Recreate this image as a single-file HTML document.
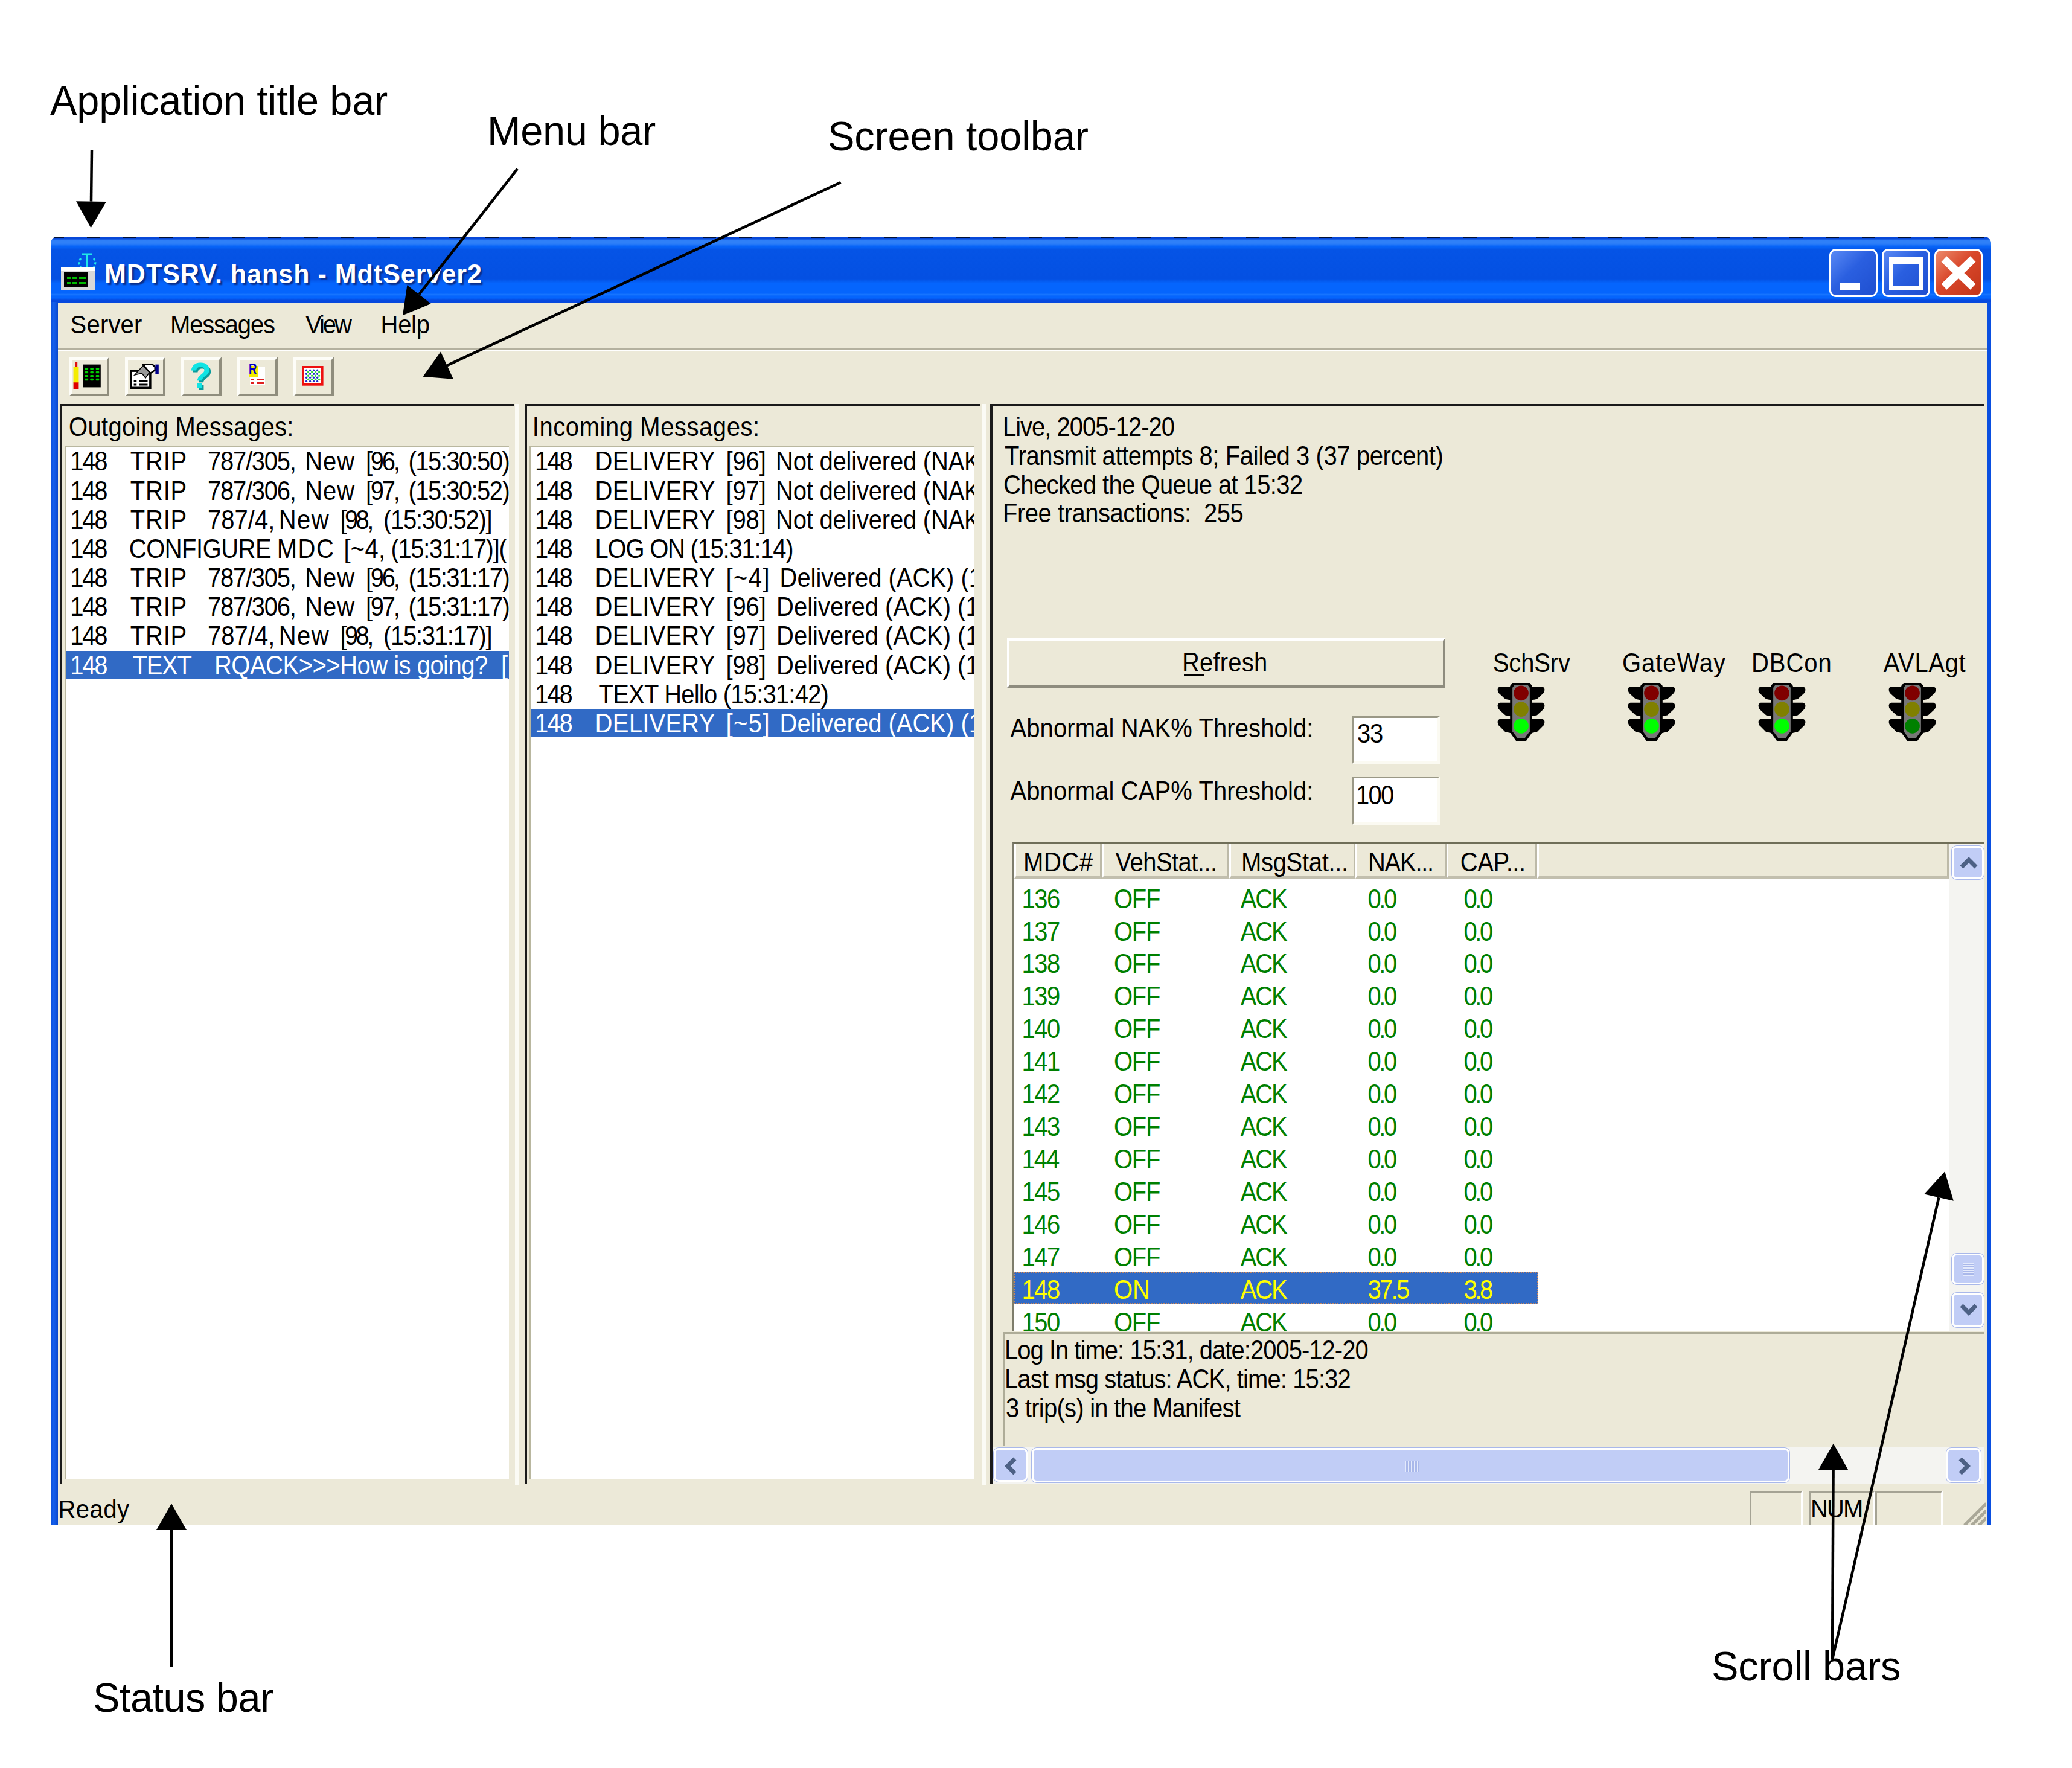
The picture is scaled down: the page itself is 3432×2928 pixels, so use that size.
<!DOCTYPE html><html lang="en"><head><meta charset="utf-8"><title>MDTSRV.hansh - MdtServer2</title><style>
html,body{margin:0;padding:0;background:#fff}
body{width:3432px;height:2928px;position:relative;overflow:hidden;font-family:"Liberation Sans",sans-serif}
div,span,svg,i,b{position:absolute;box-sizing:border-box}
.t{white-space:pre;line-height:1;font-size:40px;color:#000}
.face{background:#ece9d8}
#win{left:84px;top:392px;width:3214px;height:2134px;background:#ece9d8;overflow:hidden;border-radius:11px 11px 0 0}
#title{left:0;top:0;width:3214px;height:109px;background:linear-gradient(#0848d8 0,#0848d8 3%,#2f80f8 6%,#2f80f8 10%,#0764f8 15%,#0554e6 20%,#0450e2 64%,#0565fd 71%,#0565fd 86%,#1a78ff 88%,#0565fd 90%,#0565fd 93%,#0648de 97%,#0648de 100%)}
.lb{background:#fff;overflow:hidden;border-left:3px solid #b9b79f;border-top:2px solid #b9b79f}
.sel{background:#316ac5}
.btn3d{background:#ece9d8;border-top:4px solid #fff;border-left:4px solid #fff;border-right:4px solid #8e8c7e;border-bottom:4px solid #8e8c7e}
.tbtn{border-top:5px solid #fdfdf8;border-left:5px solid #fdfdf8;border-right:4px solid #8f8d7d;border-bottom:4px solid #8f8d7d;background:#ece9d8}
.cap{border:3px solid #fff;border-radius:11px}
.edit{background:#fff;border-top:3px solid #9a9886;border-left:3px solid #9a9886;border-right:4px solid #fbfaf2;border-bottom:4px solid #fbfaf2}
.hd{background:#ece9d8;border-right:3px solid #bdbaa8;border-bottom:4px solid #c2bfae;border-left:3px solid #fff}
.sb{background:#c1cdf6;border:3px solid #fff;border-radius:8px;box-shadow:0 0 0 1px #a9b8ea}
.trk{background:#f4f4f1}
</style></head><body>
<div id="win"><div id="title"><div style="left:0;top:0;width:3214px;height:2px;background:repeating-linear-gradient(90deg,rgba(0,0,0,.75) 0 22px,rgba(0,0,0,0) 22px 60px)"></div><svg style="left:14px;top:26px" width="62" height="64" viewBox="0 0 62 64"><g stroke="#20e8e8" stroke-width="3" fill="none"><path d="M46 26V4M38 3h16"/><path d="M36 10q-6 6 0 14M57 10q6 6 0 14" stroke-dasharray="4 3"/></g><rect x="3" y="24" width="56" height="38" fill="#d8d8d8"/><rect x="3" y="24" width="56" height="7" fill="#fff"/><rect x="8" y="33" width="40" height="25" fill="#000"/><g fill="#0b0"><rect x="13" y="40" width="6" height="4"/><rect x="22" y="40" width="8" height="4"/><rect x="33" y="40" width="12" height="4"/><rect x="13" y="49" width="6" height="4"/><rect x="22" y="49" width="8" height="4"/><rect x="33" y="49" width="12" height="4"/></g></svg><span class="t ttl" style="text-shadow:3px 3px 2px #0a2f8c;left:89.0px;top:41.0px;font-size:43px;letter-spacing:1.01px;color:#fff;font-weight:bold;transform:scaleY(1.045);transform-origin:0 36.5px;">MDTSRV. hansh - MdtServer2</span><div class="cap" style="left:2946px;top:20px;width:80px;height:80px;background:linear-gradient(135deg,#5a8af5,#2a5fe0 45%,#1f4fd0);"><i style="left:15px;top:53px;width:33px;height:12px;background:#fff"></i></div><div class="cap" style="left:3033px;top:20px;width:80px;height:80px;background:linear-gradient(135deg,#5a8af5,#2a5fe0 45%,#1f4fd0);"><i style="left:9px;top:10px;width:56px;height:55px;border:6px solid #fff;border-top-width:13px"></i></div><div class="cap" style="left:3120px;top:20px;width:80px;height:80px;background:linear-gradient(135deg,#ec8a6c,#d9472a 45%,#c2351a);"><svg style="left:0;top:0" width="74" height="74" viewBox="0 0 74 74"><path d="M13 14L61 60M61 14L13 60" stroke="#fff" stroke-width="13"/></svg></div></div><div style="left:0px;top:108px;width:12px;height:2026px;background:linear-gradient(90deg,#0a50d8,#1560ee 40%,#0a48cc)"></div><div style="left:3207px;top:108px;width:7px;height:2026px;background:#0a4fe0"></div><div id="menu" style="left:12px;top:108px;width:3195px;height:77px"><span class="t" style="left:20.6px;top:18.0px;font-size:40px;letter-spacing:0.18px;transform:scaleY(1.05);transform-origin:0 34px;">Server</span><span class="t" style="left:186.0px;top:18.0px;font-size:40px;letter-spacing:-1.19px;transform:scaleY(1.05);transform-origin:0 34px;">Messages</span><span class="t" style="left:410.0px;top:18.0px;font-size:40px;letter-spacing:-3.03px;transform:scaleY(1.05);transform-origin:0 34px;">View</span><span class="t" style="left:534.6px;top:18.0px;font-size:40px;letter-spacing:-0.31px;transform:scaleY(1.05);transform-origin:0 34px;">Help</span></div><div style="left:12px;top:184px;width:3195px;height:3px;background:#b4b19f"></div><div style="left:12px;top:187px;width:3195px;height:3px;background:#fff"></div><div class="tbtn" style="left:30px;top:199px;width:67px;height:65px;"><svg style="left:0;top:0" width="57" height="55" viewBox="0 0 57 55"><rect x="2.6" y="11" width="8.8" height="27" fill="#f4ec00"/><rect x="2.6" y="37.3" width="8.8" height="10.7" fill="#e00000"/><rect x="5.2" y="4" width="4" height="7.5" fill="#e01010"/><rect x="18" y="7.6" width="29.8" height="37.8" fill="#000"/><rect x="21.5" y="12.9" width="5.6" height="3.4" rx="1" fill="#00d000"/><rect x="30.3" y="12.9" width="5.6" height="3.4" rx="1" fill="#00d000"/><rect x="39.7" y="12.9" width="5.6" height="3.4" rx="1" fill="#00d000"/><rect x="21.5" y="18.9" width="5.6" height="3.4" rx="1" fill="#00d000"/><rect x="30.3" y="18.9" width="5.6" height="3.4" rx="1" fill="#00d000"/><rect x="39.7" y="18.9" width="5.6" height="3.4" rx="1" fill="#00d000"/><rect x="21.5" y="25" width="5.6" height="3.4" rx="1" fill="#00d000"/><rect x="30.3" y="25" width="5.6" height="3.4" rx="1" fill="#00d000"/><rect x="39.7" y="25" width="5.6" height="3.4" rx="1" fill="#00d000"/><rect x="21.5" y="30.8" width="5.6" height="3.4" rx="1" fill="#00d000"/><rect x="30.3" y="30.8" width="5.6" height="3.4" rx="1" fill="#00d000"/><rect x="39.7" y="30.8" width="5.6" height="3.4" rx="1" fill="#00d000"/></svg></div><div class="tbtn" style="left:123px;top:199px;width:67px;height:65px;"><svg style="left:0;top:0" width="57" height="55" viewBox="0 0 57 55"><rect x="5.25" y="18.15" width="31.6" height="28.1" fill="#fff" stroke="#000" stroke-width="3.5"/><path d="M9.6 35.6h4.7M18.4 35.6h14.1M9.6 41h4.7M18.4 41h14.1" stroke="#000" stroke-width="3"/><path d="M11 25L25 9.6L36 20L29 30L23 22Z" fill="#999" stroke="#000" stroke-width="1.5"/><path d="M25.1 7.6H40.6L44.7 11.6V17L37.3 21.8L32.5 17Z" fill="#fff" stroke="#000" stroke-width="2.5"/><rect x="45.4" y="7.6" width="5.4" height="16.2" fill="#00008b"/></svg></div><div class="tbtn" style="left:216px;top:199px;width:67px;height:65px;"><span class="t" style="left:8.5px;top:-5.5px;font-size:62px;font-weight:bold;color:#10e4e4;text-shadow:2.5px 2.5px 0 #0a9c9c;transform:scaleX(.95);transform-origin:0 0">?</span></div><div class="tbtn" style="left:309px;top:199px;width:67px;height:65px;"><i style="left:16.4px;top:11px;width:24.3px;height:31.4px;background:#fff"></i><i style="left:14.8px;top:10.2px;width:15.5px;height:17.4px;background:#f4ec00"></i><i style="left:30.3px;top:10.7px;width:10.6px;height:17.8px;background:#fff"></i><span class="t" style="left:14px;top:2.8px;font-size:25.7px;font-weight:bold;color:#0000c8;transform:scaleX(.72);transform-origin:0 0">R</span><i style="left:18.2px;top:31.4px;width:4.8px;height:3px;background:#e02020"></i><i style="left:27.8px;top:31.4px;width:11.2px;height:3px;background:#e02020"></i><i style="left:18.2px;top:36.9px;width:4.8px;height:3px;background:#e02020"></i><i style="left:27.8px;top:36.9px;width:11.2px;height:3px;background:#e02020"></i></div><div class="tbtn" style="left:402px;top:199px;width:67px;height:65px;"><svg style="left:0;top:0" width="57" height="55" viewBox="0 0 57 55"><rect x="10.85" y="11.85" width="31.9" height="29" fill="#fff"/><circle cx="16.5" cy="17.1" r="1.7" fill="#2030c8"/><circle cx="22.6" cy="17.1" r="1.7" fill="#2030c8"/><circle cx="28.6" cy="17.1" r="1.7" fill="#2030c8"/><circle cx="34.6" cy="17.1" r="1.7" fill="#2030c8"/><circle cx="16.5" cy="23.2" r="1.7" fill="#2030c8"/><circle cx="22.6" cy="23.2" r="1.7" fill="#2030c8"/><circle cx="28.6" cy="23.2" r="1.7" fill="#2030c8"/><circle cx="34.6" cy="23.2" r="1.7" fill="#2030c8"/><circle cx="16.5" cy="29.3" r="1.7" fill="#2030c8"/><circle cx="22.6" cy="29.3" r="1.7" fill="#2030c8"/><circle cx="28.6" cy="29.3" r="1.7" fill="#2030c8"/><circle cx="34.6" cy="29.3" r="1.7" fill="#2030c8"/><circle cx="16.5" cy="35.4" r="1.7" fill="#2030c8"/><circle cx="22.6" cy="35.4" r="1.7" fill="#2030c8"/><circle cx="28.6" cy="35.4" r="1.7" fill="#2030c8"/><circle cx="34.6" cy="35.4" r="1.7" fill="#2030c8"/><circle cx="19.5" cy="20.1" r="1.7" fill="#30d838"/><circle cx="25.6" cy="20.1" r="1.7" fill="#30d838"/><circle cx="31.6" cy="20.1" r="1.7" fill="#30d838"/><circle cx="37.6" cy="20.1" r="1.7" fill="#30d838"/><circle cx="19.5" cy="26.2" r="1.7" fill="#30d838"/><circle cx="25.6" cy="26.2" r="1.7" fill="#30d838"/><circle cx="31.6" cy="26.2" r="1.7" fill="#30d838"/><circle cx="37.6" cy="26.2" r="1.7" fill="#30d838"/><circle cx="19.5" cy="32.3" r="1.7" fill="#30d838"/><circle cx="25.6" cy="32.3" r="1.7" fill="#30d838"/><circle cx="31.6" cy="32.3" r="1.7" fill="#30d838"/><circle cx="37.6" cy="32.3" r="1.7" fill="#30d838"/><rect x="10.85" y="11.85" width="31.9" height="29" fill="none" stroke="#ee1010" stroke-width="3.7"/></svg></div><div style="left:15px;top:277px;width:752px;height:4px;background:#1a1a1a"></div><div style="left:15px;top:277px;width:4px;height:1789px;background:#1a1a1a"></div><div style="left:769px;top:277px;width:6px;height:1790px;background:#fbfbf5"></div><div style="left:785px;top:277px;width:754px;height:4px;background:#1a1a1a"></div><div style="left:785px;top:277px;width:4px;height:1789px;background:#1a1a1a"></div><div style="left:1543px;top:277px;width:6px;height:1790px;background:#fbfbf5"></div><div style="left:1556px;top:277px;width:1647px;height:4px;background:#1a1a1a"></div><div style="left:1556px;top:277px;width:4px;height:1789px;background:#1a1a1a"></div><span class="t" style="left:30.0px;top:295.5px;font-size:40px;letter-spacing:0.33px;transform:scaleY(1.09);transform-origin:0 34px;">Outgoing Messages:</span><div class="lb" style="left:23px;top:347px;width:736px;height:1710px;"><span class="t" style="left:6.3px;top:4.4px;font-size:40px;letter-spacing:-2.30px;transform:scaleY(1.09);transform-origin:0 34px;">148</span><span class="t" style="left:105.8px;top:4.4px;font-size:40px;letter-spacing:0.76px;transform:scaleY(1.09);transform-origin:0 34px;">TRIP</span><span class="t" style="left:234.0px;top:4.4px;font-size:40px;letter-spacing:-1.28px;transform:scaleY(1.09);transform-origin:0 34px;">787/305,</span><span class="t" style="left:395.3px;top:4.4px;font-size:40px;letter-spacing:0.88px;transform:scaleY(1.09);transform-origin:0 34px;">New</span><span class="t" style="left:496.0px;top:4.4px;font-size:40px;letter-spacing:-3.27px;transform:scaleY(1.09);transform-origin:0 34px;">[96,</span><span class="t" style="left:566.5px;top:4.4px;font-size:40px;letter-spacing:-1.56px;transform:scaleY(1.09);transform-origin:0 34px;">(15:30:50)</span><span class="t" style="left:6.3px;top:52.5px;font-size:40px;letter-spacing:-2.30px;transform:scaleY(1.09);transform-origin:0 34px;">148</span><span class="t" style="left:105.8px;top:52.5px;font-size:40px;letter-spacing:0.76px;transform:scaleY(1.09);transform-origin:0 34px;">TRIP</span><span class="t" style="left:234.0px;top:52.5px;font-size:40px;letter-spacing:-1.28px;transform:scaleY(1.09);transform-origin:0 34px;">787/306,</span><span class="t" style="left:395.3px;top:52.5px;font-size:40px;letter-spacing:0.88px;transform:scaleY(1.09);transform-origin:0 34px;">New</span><span class="t" style="left:496.0px;top:52.5px;font-size:40px;letter-spacing:-3.27px;transform:scaleY(1.09);transform-origin:0 34px;">[97,</span><span class="t" style="left:566.5px;top:52.5px;font-size:40px;letter-spacing:-1.56px;transform:scaleY(1.09);transform-origin:0 34px;">(15:30:52)</span><span class="t" style="left:6.3px;top:100.7px;font-size:40px;letter-spacing:-2.30px;transform:scaleY(1.09);transform-origin:0 34px;">148</span><span class="t" style="left:105.8px;top:100.7px;font-size:40px;letter-spacing:0.76px;transform:scaleY(1.09);transform-origin:0 34px;">TRIP</span><span class="t" style="left:234.0px;top:100.7px;font-size:40px;letter-spacing:0.04px;transform:scaleY(1.09);transform-origin:0 34px;">787/4,</span><span class="t" style="left:351.7px;top:100.7px;font-size:40px;letter-spacing:1.48px;transform:scaleY(1.09);transform-origin:0 34px;">New</span><span class="t" style="left:453.6px;top:100.7px;font-size:40px;letter-spacing:-3.67px;transform:scaleY(1.09);transform-origin:0 34px;">[98,</span><span class="t" style="left:525.0px;top:100.7px;font-size:40px;letter-spacing:-1.29px;transform:scaleY(1.09);transform-origin:0 34px;">(15:30:52)]</span><span class="t" style="left:6.3px;top:148.8px;font-size:40px;letter-spacing:-2.30px;transform:scaleY(1.09);transform-origin:0 34px;">148</span><span class="t" style="left:103.8px;top:148.8px;font-size:40px;letter-spacing:-0.52px;transform:scaleY(1.09);transform-origin:0 34px;">CONFIGURE</span><span class="t" style="left:348.8px;top:148.8px;font-size:40px;letter-spacing:1.50px;transform:scaleY(1.09);transform-origin:0 34px;">MDC</span><span class="t" style="left:459.4px;top:148.8px;font-size:40px;letter-spacing:0.29px;transform:scaleY(1.09);transform-origin:0 34px;">[~4,</span><span class="t" style="left:537.4px;top:148.8px;font-size:40px;letter-spacing:-1.31px;transform:scaleY(1.09);transform-origin:0 34px;">(15:31:17)](</span><span class="t" style="left:6.3px;top:197.0px;font-size:40px;letter-spacing:-2.30px;transform:scaleY(1.09);transform-origin:0 34px;">148</span><span class="t" style="left:105.8px;top:197.0px;font-size:40px;letter-spacing:0.76px;transform:scaleY(1.09);transform-origin:0 34px;">TRIP</span><span class="t" style="left:234.0px;top:197.0px;font-size:40px;letter-spacing:-1.28px;transform:scaleY(1.09);transform-origin:0 34px;">787/305,</span><span class="t" style="left:395.3px;top:197.0px;font-size:40px;letter-spacing:0.88px;transform:scaleY(1.09);transform-origin:0 34px;">New</span><span class="t" style="left:496.0px;top:197.0px;font-size:40px;letter-spacing:-3.27px;transform:scaleY(1.09);transform-origin:0 34px;">[96,</span><span class="t" style="left:566.5px;top:197.0px;font-size:40px;letter-spacing:-1.56px;transform:scaleY(1.09);transform-origin:0 34px;">(15:31:17)</span><span class="t" style="left:6.3px;top:245.1px;font-size:40px;letter-spacing:-2.30px;transform:scaleY(1.09);transform-origin:0 34px;">148</span><span class="t" style="left:105.8px;top:245.1px;font-size:40px;letter-spacing:0.76px;transform:scaleY(1.09);transform-origin:0 34px;">TRIP</span><span class="t" style="left:234.0px;top:245.1px;font-size:40px;letter-spacing:-1.28px;transform:scaleY(1.09);transform-origin:0 34px;">787/306,</span><span class="t" style="left:395.3px;top:245.1px;font-size:40px;letter-spacing:0.88px;transform:scaleY(1.09);transform-origin:0 34px;">New</span><span class="t" style="left:496.0px;top:245.1px;font-size:40px;letter-spacing:-3.27px;transform:scaleY(1.09);transform-origin:0 34px;">[97,</span><span class="t" style="left:566.5px;top:245.1px;font-size:40px;letter-spacing:-1.56px;transform:scaleY(1.09);transform-origin:0 34px;">(15:31:17)</span><span class="t" style="left:6.3px;top:293.3px;font-size:40px;letter-spacing:-2.30px;transform:scaleY(1.09);transform-origin:0 34px;">148</span><span class="t" style="left:105.8px;top:293.3px;font-size:40px;letter-spacing:0.76px;transform:scaleY(1.09);transform-origin:0 34px;">TRIP</span><span class="t" style="left:234.0px;top:293.3px;font-size:40px;letter-spacing:0.04px;transform:scaleY(1.09);transform-origin:0 34px;">787/4,</span><span class="t" style="left:351.7px;top:293.3px;font-size:40px;letter-spacing:1.48px;transform:scaleY(1.09);transform-origin:0 34px;">New</span><span class="t" style="left:453.6px;top:293.3px;font-size:40px;letter-spacing:-3.67px;transform:scaleY(1.09);transform-origin:0 34px;">[98,</span><span class="t" style="left:525.0px;top:293.3px;font-size:40px;letter-spacing:-1.29px;transform:scaleY(1.09);transform-origin:0 34px;">(15:31:17)]</span><div class="sel" style="left:0px;top:337px;width:733px;height:46px;"></div><span class="t" style="left:6.3px;top:341.5px;font-size:40px;letter-spacing:-2.30px;color:#fff;transform:scaleY(1.09);transform-origin:0 34px;">148</span><span class="t" style="left:109.8px;top:341.5px;font-size:40px;letter-spacing:-1.40px;color:#fff;transform:scaleY(1.09);transform-origin:0 34px;">TEXT</span><span class="t" style="left:245.0px;top:341.5px;font-size:40px;letter-spacing:-0.52px;color:#fff;transform:scaleY(1.09);transform-origin:0 34px;">RQACK&gt;&gt;&gt;How is going?</span><span class="t" style="left:720.0px;top:341.5px;font-size:40px;color:#fff;transform:scaleY(1.09);transform-origin:0 34px;">[</span></div><span class="t" style="left:797.8px;top:295.5px;font-size:40px;letter-spacing:0.56px;transform:scaleY(1.09);transform-origin:0 34px;">Incoming Messages:</span><div class="lb" style="left:793px;top:347px;width:737px;height:1710px;"><span class="t" style="left:6.0px;top:4.4px;font-size:40px;letter-spacing:-2.00px;transform:scaleY(1.09);transform-origin:0 34px;">148</span><span class="t" style="left:105.6px;top:4.4px;font-size:40px;letter-spacing:0.24px;transform:scaleY(1.09);transform-origin:0 34px;">DELIVERY</span><span class="t" style="left:322.5px;top:4.4px;font-size:40px;letter-spacing:-0.14px;transform:scaleY(1.09);transform-origin:0 34px;">[96]</span><span class="t" style="left:405.0px;top:4.4px;font-size:40px;letter-spacing:-0.21px;transform:scaleY(1.09);transform-origin:0 34px;">Not delivered (NAK) (15:30:50)</span><span class="t" style="left:6.0px;top:52.5px;font-size:40px;letter-spacing:-2.00px;transform:scaleY(1.09);transform-origin:0 34px;">148</span><span class="t" style="left:105.6px;top:52.5px;font-size:40px;letter-spacing:0.24px;transform:scaleY(1.09);transform-origin:0 34px;">DELIVERY</span><span class="t" style="left:322.5px;top:52.5px;font-size:40px;letter-spacing:-0.14px;transform:scaleY(1.09);transform-origin:0 34px;">[97]</span><span class="t" style="left:405.0px;top:52.5px;font-size:40px;letter-spacing:-0.21px;transform:scaleY(1.09);transform-origin:0 34px;">Not delivered (NAK) (15:30:52)</span><span class="t" style="left:6.0px;top:100.7px;font-size:40px;letter-spacing:-2.00px;transform:scaleY(1.09);transform-origin:0 34px;">148</span><span class="t" style="left:105.6px;top:100.7px;font-size:40px;letter-spacing:0.24px;transform:scaleY(1.09);transform-origin:0 34px;">DELIVERY</span><span class="t" style="left:322.5px;top:100.7px;font-size:40px;letter-spacing:-0.14px;transform:scaleY(1.09);transform-origin:0 34px;">[98]</span><span class="t" style="left:405.0px;top:100.7px;font-size:40px;letter-spacing:-0.21px;transform:scaleY(1.09);transform-origin:0 34px;">Not delivered (NAK) (15:30:54)</span><span class="t" style="left:6.0px;top:148.8px;font-size:40px;letter-spacing:-2.00px;transform:scaleY(1.09);transform-origin:0 34px;">148</span><span class="t" style="left:105.6px;top:148.8px;font-size:40px;letter-spacing:-1.25px;transform:scaleY(1.09);transform-origin:0 34px;">LOG ON (15:31:14)</span><span class="t" style="left:6.0px;top:197.0px;font-size:40px;letter-spacing:-2.00px;transform:scaleY(1.09);transform-origin:0 34px;">148</span><span class="t" style="left:105.6px;top:197.0px;font-size:40px;letter-spacing:0.24px;transform:scaleY(1.09);transform-origin:0 34px;">DELIVERY</span><span class="t" style="left:322.5px;top:197.0px;font-size:40px;letter-spacing:1.43px;transform:scaleY(1.09);transform-origin:0 34px;">[~4]</span><span class="t" style="left:411.5px;top:197.0px;font-size:40px;letter-spacing:-0.01px;transform:scaleY(1.09);transform-origin:0 34px;">Delivered (ACK) (15:31:17)</span><span class="t" style="left:6.0px;top:245.1px;font-size:40px;letter-spacing:-2.00px;transform:scaleY(1.09);transform-origin:0 34px;">148</span><span class="t" style="left:105.6px;top:245.1px;font-size:40px;letter-spacing:0.24px;transform:scaleY(1.09);transform-origin:0 34px;">DELIVERY</span><span class="t" style="left:322.5px;top:245.1px;font-size:40px;letter-spacing:-0.14px;transform:scaleY(1.09);transform-origin:0 34px;">[96]</span><span class="t" style="left:406.0px;top:245.1px;font-size:40px;transform:scaleY(1.09);transform-origin:0 34px;">Delivered (ACK) (15:31:18)</span><span class="t" style="left:6.0px;top:293.3px;font-size:40px;letter-spacing:-2.00px;transform:scaleY(1.09);transform-origin:0 34px;">148</span><span class="t" style="left:105.6px;top:293.3px;font-size:40px;letter-spacing:0.24px;transform:scaleY(1.09);transform-origin:0 34px;">DELIVERY</span><span class="t" style="left:322.5px;top:293.3px;font-size:40px;letter-spacing:-0.14px;transform:scaleY(1.09);transform-origin:0 34px;">[97]</span><span class="t" style="left:406.0px;top:293.3px;font-size:40px;transform:scaleY(1.09);transform-origin:0 34px;">Delivered (ACK) (15:31:18)</span><span class="t" style="left:6.0px;top:341.5px;font-size:40px;letter-spacing:-2.00px;transform:scaleY(1.09);transform-origin:0 34px;">148</span><span class="t" style="left:105.6px;top:341.5px;font-size:40px;letter-spacing:0.24px;transform:scaleY(1.09);transform-origin:0 34px;">DELIVERY</span><span class="t" style="left:322.5px;top:341.5px;font-size:40px;letter-spacing:-0.14px;transform:scaleY(1.09);transform-origin:0 34px;">[98]</span><span class="t" style="left:406.0px;top:341.5px;font-size:40px;transform:scaleY(1.09);transform-origin:0 34px;">Delivered (ACK) (15:31:18)</span><span class="t" style="left:6.0px;top:389.6px;font-size:40px;letter-spacing:-2.00px;transform:scaleY(1.09);transform-origin:0 34px;">148</span><span class="t" style="left:111.5px;top:389.6px;font-size:40px;letter-spacing:-0.79px;transform:scaleY(1.09);transform-origin:0 34px;">TEXT Hello (15:31:42)</span><div class="sel" style="left:0px;top:433px;width:735px;height:46px;"></div><span class="t" style="left:6.0px;top:437.8px;font-size:40px;letter-spacing:-2.00px;color:#fff;transform:scaleY(1.09);transform-origin:0 34px;">148</span><span class="t" style="left:105.6px;top:437.8px;font-size:40px;letter-spacing:0.24px;color:#fff;transform:scaleY(1.09);transform-origin:0 34px;">DELIVERY</span><span class="t" style="left:322.5px;top:437.8px;font-size:40px;letter-spacing:1.43px;color:#fff;transform:scaleY(1.09);transform-origin:0 34px;">[~5]</span><span class="t" style="left:411.5px;top:437.8px;font-size:40px;letter-spacing:-0.01px;color:#fff;transform:scaleY(1.09);transform-origin:0 34px;">Delivered (ACK) (15:31:43)</span></div><span class="t" style="left:1577.0px;top:295.8px;font-size:40px;letter-spacing:-1.02px;transform:scaleY(1.09);transform-origin:0 34px;">Live, 2005-12-20</span><span class="t" style="left:1580.0px;top:343.6px;font-size:40px;letter-spacing:-0.40px;transform:scaleY(1.09);transform-origin:0 34px;">Transmit attempts 8; Failed 3 (37 percent)</span><span class="t" style="left:1578.0px;top:391.5px;font-size:40px;letter-spacing:-0.61px;transform:scaleY(1.09);transform-origin:0 34px;">Checked the Queue at 15:32</span><span class="t" style="left:1577.0px;top:439.2px;font-size:40px;letter-spacing:-0.47px;transform:scaleY(1.09);transform-origin:0 34px;">Free transactions:  255</span><div class="btn3d" style="left:1584px;top:665px;width:726px;height:82px;"><span class="t" style="left:286.0px;top:16.5px;font-size:40px;letter-spacing:0.20px;transform:scaleY(1.09);transform-origin:0 34px;">Refresh</span><div style="left:289px;top:56px;width:34px;height:3px;background:#000"></div></div><span class="t" style="left:1589.4px;top:794.5px;font-size:40px;letter-spacing:0.11px;transform:scaleY(1.09);transform-origin:0 34px;">Abnormal NAK% Threshold:</span><span class="t" style="left:1589.4px;top:898.5px;font-size:40px;letter-spacing:0.11px;transform:scaleY(1.09);transform-origin:0 34px;">Abnormal CAP% Threshold:</span><div class="edit" style="left:2156px;top:794px;width:145px;height:79px;"><span class="t" style="left:5.0px;top:6.5px;font-size:40px;letter-spacing:-1.25px;transform:scaleY(1.09);transform-origin:0 34px;">33</span></div><div class="edit" style="left:2156px;top:894px;width:145px;height:80px;"><span class="t" style="left:3.0px;top:8.5px;font-size:40px;letter-spacing:-1.75px;transform:scaleY(1.09);transform-origin:0 34px;">100</span></div><span class="t" style="left:2388.8px;top:686.5px;font-size:40px;letter-spacing:-0.15px;transform:scaleY(1.09);transform-origin:0 34px;">SchSrv</span><span class="t" style="left:2603.0px;top:686.5px;font-size:40px;letter-spacing:0.96px;transform:scaleY(1.09);transform-origin:0 34px;">GateWay</span><span class="t" style="left:2817.0px;top:686.5px;font-size:40px;letter-spacing:0.95px;transform:scaleY(1.09);transform-origin:0 34px;">DBCon</span><span class="t" style="left:3035.7px;top:686.5px;font-size:40px;letter-spacing:0.67px;transform:scaleY(1.09);transform-origin:0 34px;">AVLAgt</span><svg style="left:2396px;top:739px" width="80" height="99" viewBox="0 0 80 100"><g fill="#000">  <path d="M4 6H23V29L13 27L2 17Q-1 12 1 8Z"/><path d="M75 6H56V29L66 27L77 17Q80 12 78 8Z"/>  <path d="M4 33H23V56L13 54L2 44Q-1 39 1 35Z"/><path d="M75 33H56V56L66 54L77 44Q80 39 78 35Z"/>  <path d="M4 60H23V84L13 82L2 71Q-1 66 1 62Z"/><path d="M75 60H56V84L66 82L77 71Q80 66 78 62Z"/>  <path d="M25 0H54L58 5V83L48 97H31L21 83V5Z"/> </g> <path d="M28 4H51L54 8V81L46 92H33L25 81V8Z" fill="#777"/> <circle cx="39.5" cy="17" r="12.5" fill="#800000"/><circle cx="39.5" cy="44" r="12.5" fill="#808000"/><circle cx="39.5" cy="72" r="12.5" fill="#00ff00"/></svg><svg style="left:2612px;top:739px" width="80" height="99" viewBox="0 0 80 100"><g fill="#000">  <path d="M4 6H23V29L13 27L2 17Q-1 12 1 8Z"/><path d="M75 6H56V29L66 27L77 17Q80 12 78 8Z"/>  <path d="M4 33H23V56L13 54L2 44Q-1 39 1 35Z"/><path d="M75 33H56V56L66 54L77 44Q80 39 78 35Z"/>  <path d="M4 60H23V84L13 82L2 71Q-1 66 1 62Z"/><path d="M75 60H56V84L66 82L77 71Q80 66 78 62Z"/>  <path d="M25 0H54L58 5V83L48 97H31L21 83V5Z"/> </g> <path d="M28 4H51L54 8V81L46 92H33L25 81V8Z" fill="#777"/> <circle cx="39.5" cy="17" r="12.5" fill="#800000"/><circle cx="39.5" cy="44" r="12.5" fill="#808000"/><circle cx="39.5" cy="72" r="12.5" fill="#00ff00"/></svg><svg style="left:2828px;top:739px" width="80" height="99" viewBox="0 0 80 100"><g fill="#000">  <path d="M4 6H23V29L13 27L2 17Q-1 12 1 8Z"/><path d="M75 6H56V29L66 27L77 17Q80 12 78 8Z"/>  <path d="M4 33H23V56L13 54L2 44Q-1 39 1 35Z"/><path d="M75 33H56V56L66 54L77 44Q80 39 78 35Z"/>  <path d="M4 60H23V84L13 82L2 71Q-1 66 1 62Z"/><path d="M75 60H56V84L66 82L77 71Q80 66 78 62Z"/>  <path d="M25 0H54L58 5V83L48 97H31L21 83V5Z"/> </g> <path d="M28 4H51L54 8V81L46 92H33L25 81V8Z" fill="#777"/> <circle cx="39.5" cy="17" r="12.5" fill="#800000"/><circle cx="39.5" cy="44" r="12.5" fill="#808000"/><circle cx="39.5" cy="72" r="12.5" fill="#00ff00"/></svg><svg style="left:3044px;top:739px" width="80" height="99" viewBox="0 0 80 100"><g fill="#000">  <path d="M4 6H23V29L13 27L2 17Q-1 12 1 8Z"/><path d="M75 6H56V29L66 27L77 17Q80 12 78 8Z"/>  <path d="M4 33H23V56L13 54L2 44Q-1 39 1 35Z"/><path d="M75 33H56V56L66 54L77 44Q80 39 78 35Z"/>  <path d="M4 60H23V84L13 82L2 71Q-1 66 1 62Z"/><path d="M75 60H56V84L66 82L77 71Q80 66 78 62Z"/>  <path d="M25 0H54L58 5V83L48 97H31L21 83V5Z"/> </g> <path d="M28 4H51L54 8V81L46 92H33L25 81V8Z" fill="#777"/> <circle cx="39.5" cy="17" r="12.5" fill="#800000"/><circle cx="39.5" cy="44" r="12.5" fill="#808000"/><circle cx="39.5" cy="72" r="12.5" fill="#008000"/></svg><div style="left:1592px;top:1002px;width:1611px;height:810px;background:#fff;overflow:hidden;border-left:4px solid #7e7d6c;border-top:4px solid #6f6e58"><div class="hd" style="left:0px;top:0px;width:145px;height:57px;"><span class="t" style="left:12.0px;top:11.0px;font-size:40px;letter-spacing:0.64px;transform:scaleY(1.09);transform-origin:0 34px;">MDC#</span></div><div class="hd" style="left:145px;top:0px;width:211px;height:57px;"><span class="t" style="left:19.6px;top:11.0px;font-size:40px;letter-spacing:-0.55px;transform:scaleY(1.09);transform-origin:0 34px;">VehStat...</span></div><div class="hd" style="left:356px;top:0px;width:209px;height:57px;"><span class="t" style="left:17.0px;top:11.0px;font-size:40px;letter-spacing:-0.33px;transform:scaleY(1.09);transform-origin:0 34px;">MsgStat...</span></div><div class="hd" style="left:565px;top:0px;width:151px;height:57px;"><span class="t" style="left:18.0px;top:11.0px;font-size:40px;letter-spacing:-1.29px;transform:scaleY(1.09);transform-origin:0 34px;">NAK...</span></div><div class="hd" style="left:716px;top:0px;width:150px;height:57px;"><span class="t" style="left:19.8px;top:11.0px;font-size:40px;letter-spacing:-0.42px;transform:scaleY(1.09);transform-origin:0 34px;">CAP...</span></div><div class="hd" style="left:866px;top:0px;width:682px;height:57px;"></div><span class="t" style="left:12.6px;top:71.5px;font-size:40px;letter-spacing:-1.55px;color:#008000;transform:scaleY(1.09);transform-origin:0 34px;">136</span><span class="t" style="left:165.0px;top:71.5px;font-size:40px;letter-spacing:-1.27px;color:#008000;transform:scaleY(1.09);transform-origin:0 34px;">OFF</span><span class="t" style="left:374.7px;top:71.5px;font-size:40px;letter-spacing:-2.13px;color:#008000;transform:scaleY(1.09);transform-origin:0 34px;">ACK</span><span class="t" style="left:585.5px;top:71.5px;font-size:40px;letter-spacing:-3.43px;color:#008000;transform:scaleY(1.09);transform-origin:0 34px;">0.0</span><span class="t" style="left:744.5px;top:71.5px;font-size:40px;letter-spacing:-3.43px;color:#008000;transform:scaleY(1.09);transform-origin:0 34px;">0.0</span><span class="t" style="left:12.6px;top:125.5px;font-size:40px;letter-spacing:-1.55px;color:#008000;transform:scaleY(1.09);transform-origin:0 34px;">137</span><span class="t" style="left:165.0px;top:125.5px;font-size:40px;letter-spacing:-1.27px;color:#008000;transform:scaleY(1.09);transform-origin:0 34px;">OFF</span><span class="t" style="left:374.7px;top:125.5px;font-size:40px;letter-spacing:-2.13px;color:#008000;transform:scaleY(1.09);transform-origin:0 34px;">ACK</span><span class="t" style="left:585.5px;top:125.5px;font-size:40px;letter-spacing:-3.43px;color:#008000;transform:scaleY(1.09);transform-origin:0 34px;">0.0</span><span class="t" style="left:744.5px;top:125.5px;font-size:40px;letter-spacing:-3.43px;color:#008000;transform:scaleY(1.09);transform-origin:0 34px;">0.0</span><span class="t" style="left:12.6px;top:179.4px;font-size:40px;letter-spacing:-1.55px;color:#008000;transform:scaleY(1.09);transform-origin:0 34px;">138</span><span class="t" style="left:165.0px;top:179.4px;font-size:40px;letter-spacing:-1.27px;color:#008000;transform:scaleY(1.09);transform-origin:0 34px;">OFF</span><span class="t" style="left:374.7px;top:179.4px;font-size:40px;letter-spacing:-2.13px;color:#008000;transform:scaleY(1.09);transform-origin:0 34px;">ACK</span><span class="t" style="left:585.5px;top:179.4px;font-size:40px;letter-spacing:-3.43px;color:#008000;transform:scaleY(1.09);transform-origin:0 34px;">0.0</span><span class="t" style="left:744.5px;top:179.4px;font-size:40px;letter-spacing:-3.43px;color:#008000;transform:scaleY(1.09);transform-origin:0 34px;">0.0</span><span class="t" style="left:12.6px;top:233.4px;font-size:40px;letter-spacing:-1.55px;color:#008000;transform:scaleY(1.09);transform-origin:0 34px;">139</span><span class="t" style="left:165.0px;top:233.4px;font-size:40px;letter-spacing:-1.27px;color:#008000;transform:scaleY(1.09);transform-origin:0 34px;">OFF</span><span class="t" style="left:374.7px;top:233.4px;font-size:40px;letter-spacing:-2.13px;color:#008000;transform:scaleY(1.09);transform-origin:0 34px;">ACK</span><span class="t" style="left:585.5px;top:233.4px;font-size:40px;letter-spacing:-3.43px;color:#008000;transform:scaleY(1.09);transform-origin:0 34px;">0.0</span><span class="t" style="left:744.5px;top:233.4px;font-size:40px;letter-spacing:-3.43px;color:#008000;transform:scaleY(1.09);transform-origin:0 34px;">0.0</span><span class="t" style="left:12.6px;top:287.4px;font-size:40px;letter-spacing:-1.55px;color:#008000;transform:scaleY(1.09);transform-origin:0 34px;">140</span><span class="t" style="left:165.0px;top:287.4px;font-size:40px;letter-spacing:-1.27px;color:#008000;transform:scaleY(1.09);transform-origin:0 34px;">OFF</span><span class="t" style="left:374.7px;top:287.4px;font-size:40px;letter-spacing:-2.13px;color:#008000;transform:scaleY(1.09);transform-origin:0 34px;">ACK</span><span class="t" style="left:585.5px;top:287.4px;font-size:40px;letter-spacing:-3.43px;color:#008000;transform:scaleY(1.09);transform-origin:0 34px;">0.0</span><span class="t" style="left:744.5px;top:287.4px;font-size:40px;letter-spacing:-3.43px;color:#008000;transform:scaleY(1.09);transform-origin:0 34px;">0.0</span><span class="t" style="left:12.6px;top:341.3px;font-size:40px;letter-spacing:-1.55px;color:#008000;transform:scaleY(1.09);transform-origin:0 34px;">141</span><span class="t" style="left:165.0px;top:341.3px;font-size:40px;letter-spacing:-1.27px;color:#008000;transform:scaleY(1.09);transform-origin:0 34px;">OFF</span><span class="t" style="left:374.7px;top:341.3px;font-size:40px;letter-spacing:-2.13px;color:#008000;transform:scaleY(1.09);transform-origin:0 34px;">ACK</span><span class="t" style="left:585.5px;top:341.3px;font-size:40px;letter-spacing:-3.43px;color:#008000;transform:scaleY(1.09);transform-origin:0 34px;">0.0</span><span class="t" style="left:744.5px;top:341.3px;font-size:40px;letter-spacing:-3.43px;color:#008000;transform:scaleY(1.09);transform-origin:0 34px;">0.0</span><span class="t" style="left:12.6px;top:395.3px;font-size:40px;letter-spacing:-1.55px;color:#008000;transform:scaleY(1.09);transform-origin:0 34px;">142</span><span class="t" style="left:165.0px;top:395.3px;font-size:40px;letter-spacing:-1.27px;color:#008000;transform:scaleY(1.09);transform-origin:0 34px;">OFF</span><span class="t" style="left:374.7px;top:395.3px;font-size:40px;letter-spacing:-2.13px;color:#008000;transform:scaleY(1.09);transform-origin:0 34px;">ACK</span><span class="t" style="left:585.5px;top:395.3px;font-size:40px;letter-spacing:-3.43px;color:#008000;transform:scaleY(1.09);transform-origin:0 34px;">0.0</span><span class="t" style="left:744.5px;top:395.3px;font-size:40px;letter-spacing:-3.43px;color:#008000;transform:scaleY(1.09);transform-origin:0 34px;">0.0</span><span class="t" style="left:12.6px;top:449.3px;font-size:40px;letter-spacing:-1.55px;color:#008000;transform:scaleY(1.09);transform-origin:0 34px;">143</span><span class="t" style="left:165.0px;top:449.3px;font-size:40px;letter-spacing:-1.27px;color:#008000;transform:scaleY(1.09);transform-origin:0 34px;">OFF</span><span class="t" style="left:374.7px;top:449.3px;font-size:40px;letter-spacing:-2.13px;color:#008000;transform:scaleY(1.09);transform-origin:0 34px;">ACK</span><span class="t" style="left:585.5px;top:449.3px;font-size:40px;letter-spacing:-3.43px;color:#008000;transform:scaleY(1.09);transform-origin:0 34px;">0.0</span><span class="t" style="left:744.5px;top:449.3px;font-size:40px;letter-spacing:-3.43px;color:#008000;transform:scaleY(1.09);transform-origin:0 34px;">0.0</span><span class="t" style="left:12.6px;top:503.3px;font-size:40px;letter-spacing:-2.05px;color:#008000;transform:scaleY(1.09);transform-origin:0 34px;">144</span><span class="t" style="left:165.0px;top:503.3px;font-size:40px;letter-spacing:-1.27px;color:#008000;transform:scaleY(1.09);transform-origin:0 34px;">OFF</span><span class="t" style="left:374.7px;top:503.3px;font-size:40px;letter-spacing:-2.13px;color:#008000;transform:scaleY(1.09);transform-origin:0 34px;">ACK</span><span class="t" style="left:585.5px;top:503.3px;font-size:40px;letter-spacing:-3.43px;color:#008000;transform:scaleY(1.09);transform-origin:0 34px;">0.0</span><span class="t" style="left:744.5px;top:503.3px;font-size:40px;letter-spacing:-3.43px;color:#008000;transform:scaleY(1.09);transform-origin:0 34px;">0.0</span><span class="t" style="left:12.6px;top:557.2px;font-size:40px;letter-spacing:-1.55px;color:#008000;transform:scaleY(1.09);transform-origin:0 34px;">145</span><span class="t" style="left:165.0px;top:557.2px;font-size:40px;letter-spacing:-1.27px;color:#008000;transform:scaleY(1.09);transform-origin:0 34px;">OFF</span><span class="t" style="left:374.7px;top:557.2px;font-size:40px;letter-spacing:-2.13px;color:#008000;transform:scaleY(1.09);transform-origin:0 34px;">ACK</span><span class="t" style="left:585.5px;top:557.2px;font-size:40px;letter-spacing:-3.43px;color:#008000;transform:scaleY(1.09);transform-origin:0 34px;">0.0</span><span class="t" style="left:744.5px;top:557.2px;font-size:40px;letter-spacing:-3.43px;color:#008000;transform:scaleY(1.09);transform-origin:0 34px;">0.0</span><span class="t" style="left:12.6px;top:611.2px;font-size:40px;letter-spacing:-1.55px;color:#008000;transform:scaleY(1.09);transform-origin:0 34px;">146</span><span class="t" style="left:165.0px;top:611.2px;font-size:40px;letter-spacing:-1.27px;color:#008000;transform:scaleY(1.09);transform-origin:0 34px;">OFF</span><span class="t" style="left:374.7px;top:611.2px;font-size:40px;letter-spacing:-2.13px;color:#008000;transform:scaleY(1.09);transform-origin:0 34px;">ACK</span><span class="t" style="left:585.5px;top:611.2px;font-size:40px;letter-spacing:-3.43px;color:#008000;transform:scaleY(1.09);transform-origin:0 34px;">0.0</span><span class="t" style="left:744.5px;top:611.2px;font-size:40px;letter-spacing:-3.43px;color:#008000;transform:scaleY(1.09);transform-origin:0 34px;">0.0</span><span class="t" style="left:12.6px;top:665.2px;font-size:40px;letter-spacing:-1.55px;color:#008000;transform:scaleY(1.09);transform-origin:0 34px;">147</span><span class="t" style="left:165.0px;top:665.2px;font-size:40px;letter-spacing:-1.27px;color:#008000;transform:scaleY(1.09);transform-origin:0 34px;">OFF</span><span class="t" style="left:374.7px;top:665.2px;font-size:40px;letter-spacing:-2.13px;color:#008000;transform:scaleY(1.09);transform-origin:0 34px;">ACK</span><span class="t" style="left:585.5px;top:665.2px;font-size:40px;letter-spacing:-3.43px;color:#008000;transform:scaleY(1.09);transform-origin:0 34px;">0.0</span><span class="t" style="left:744.5px;top:665.2px;font-size:40px;letter-spacing:-3.43px;color:#008000;transform:scaleY(1.09);transform-origin:0 34px;">0.0</span><div class="sel" style="left:0px;top:708.5px;width:868px;height:53px;outline:2px dotted #c8865c;outline-offset:-2px;"></div><span class="t" style="left:12.6px;top:719.1px;font-size:40px;letter-spacing:-1.55px;color:#ffff00;transform:scaleY(1.09);transform-origin:0 34px;">148</span><span class="t" style="left:165.0px;top:719.1px;font-size:40px;letter-spacing:-0.11px;color:#ffff00;transform:scaleY(1.09);transform-origin:0 34px;">ON</span><span class="t" style="left:374.7px;top:719.1px;font-size:40px;letter-spacing:-2.13px;color:#ffff00;transform:scaleY(1.09);transform-origin:0 34px;">ACK</span><span class="t" style="left:585.5px;top:719.1px;font-size:40px;letter-spacing:-2.70px;color:#ffff00;transform:scaleY(1.09);transform-origin:0 34px;">37.5</span><span class="t" style="left:744.5px;top:719.1px;font-size:40px;letter-spacing:-3.43px;color:#ffff00;transform:scaleY(1.09);transform-origin:0 34px;">3.8</span><span class="t" style="left:12.6px;top:773.1px;font-size:40px;letter-spacing:-1.55px;color:#008000;transform:scaleY(1.09);transform-origin:0 34px;">150</span><span class="t" style="left:165.0px;top:773.1px;font-size:40px;letter-spacing:-1.27px;color:#008000;transform:scaleY(1.09);transform-origin:0 34px;">OFF</span><span class="t" style="left:374.7px;top:773.1px;font-size:40px;letter-spacing:-2.13px;color:#008000;transform:scaleY(1.09);transform-origin:0 34px;">ACK</span><span class="t" style="left:585.5px;top:773.1px;font-size:40px;letter-spacing:-3.43px;color:#008000;transform:scaleY(1.09);transform-origin:0 34px;">0.0</span><span class="t" style="left:744.5px;top:773.1px;font-size:40px;letter-spacing:-3.43px;color:#008000;transform:scaleY(1.09);transform-origin:0 34px;">0.0</span><div class="trk" style="left:1548px;top:0px;width:59px;height:806px;"></div><div class="sb" style="left:1553px;top:3px;width:53px;height:55px;"><svg style="left:9px;top:12px" width="32" height="24" viewBox="0 0 32 24"><path d="M4 20L16 8L28 20" fill="none" stroke="#4d6185" stroke-width="7"/></svg></div><div class="sb" style="left:1553px;top:678px;width:53px;height:51px;"><i style="left:15px;top:12px;width:18px;height:22px;background:repeating-linear-gradient(#e4eafc 0 2px,#a9b8ea 2px 4px)"></i></div><div class="sb" style="left:1553px;top:743px;width:53px;height:57px;"><svg style="left:9px;top:14px" width="32" height="24" viewBox="0 0 32 24"><path d="M4 4L16 16L28 4" fill="none" stroke="#4d6185" stroke-width="7"/></svg></div></div><div class="face" style="left:1577px;top:1814px;width:1626px;height:189px;border-top:3px solid #aeac98;border-left:3px solid #aeac98"></div><span class="t" style="left:1580.0px;top:1825.0px;font-size:40px;letter-spacing:-0.98px;transform:scaleY(1.09);transform-origin:0 34px;">Log In time: 15:31, date:2005-12-20</span><span class="t" style="left:1580.0px;top:1872.5px;font-size:40px;letter-spacing:-0.90px;transform:scaleY(1.09);transform-origin:0 34px;">Last msg status: ACK, time: 15:32</span><span class="t" style="left:1582.0px;top:1921.0px;font-size:40px;letter-spacing:-0.75px;transform:scaleY(1.09);transform-origin:0 34px;">3 trip(s) in the Manifest</span><div class="trk" style="left:1561px;top:2004px;width:1642px;height:61px;"></div><div class="sb" style="left:1562px;top:2006px;width:56px;height:56px;"><svg style="left:12px;top:11px" width="24" height="32" viewBox="0 0 24 32"><path d="M20 4L8 16L20 28" fill="none" stroke="#4d6185" stroke-width="7"/></svg></div><div class="sb" style="left:1625px;top:2006px;width:1255px;height:57px;"><i style="left:615px;top:18px;width:24px;height:18px;background:repeating-linear-gradient(90deg,#e4eafc 0 2px,#a9b8ea 2px 5px)"></i></div><div class="sb" style="left:3140px;top:2006px;width:57px;height:57px;"><svg style="left:16px;top:11px" width="24" height="32" viewBox="0 0 24 32"><path d="M4 4L16 16L4 28" fill="none" stroke="#4d6185" stroke-width="7"/></svg></div><span class="t" style="left:12.4px;top:2088.0px;font-size:40px;letter-spacing:0.49px;transform:scaleY(1.05);transform-origin:0 34px;">Ready</span><div style="left:2814px;top:2077px;width:88px;height:60px;border-top:3px solid #a5a394;border-left:3px solid #a5a394;border-right:3px solid #fff"></div><div style="left:2913px;top:2077px;width:109px;height:60px;border-top:3px solid #a5a394;border-left:3px solid #a5a394;border-right:3px solid #fff"></div><div style="left:3022px;top:2077px;width:112px;height:60px;border-top:3px solid #a5a394;border-left:3px solid #a5a394;border-right:3px solid #fff"></div><span class="t" style="left:2915.0px;top:2087.0px;font-size:40px;letter-spacing:-1.89px;transform:scaleY(1.05);transform-origin:0 34px;">NUM</span><svg style="left:3166px;top:2094px" width="40" height="40" viewBox="0 0 40 40"><path d="M4 40L40 4M16 40L40 16M28 40L40 28" stroke="#aaa898" stroke-width="5"/></svg></div>
<div id="annotations" style="left:0;top:0;width:0;height:0">
<span class="t an" style="left:83.0px;top:134.0px;font-size:66.7px;letter-spacing:-0.21px;transform:scaleY(1.04);transform-origin:0 56.35px;">Application title bar</span><span class="t an" style="left:807.0px;top:184.2px;font-size:66.7px;letter-spacing:-0.36px;transform:scaleY(1.04);transform-origin:0 56.35px;">Menu bar</span><span class="t an" style="left:1371.0px;top:193.1px;font-size:66.7px;letter-spacing:-0.14px;transform:scaleY(1.04);transform-origin:0 56.35px;">Screen toolbar</span><span class="t an" style="left:154.0px;top:2778.7px;font-size:66.7px;letter-spacing:-0.53px;transform:scaleY(1.04);transform-origin:0 56.35px;">Status bar</span><span class="t an" style="left:2835.0px;top:2727.3px;font-size:66.7px;letter-spacing:-0.17px;transform:scaleY(1.04);transform-origin:0 56.35px;">Scroll bars</span>
<svg style="left:0;top:0" width="3432" height="2928" viewBox="0 0 3432 2928"><line x1="152.0" y1="248.0" x2="151.0" y2="333.6" stroke="#000" stroke-width="4.5"/><polygon points="150.5,377.6 126.0,333.3 176.0,333.9" fill="#000"/><line x1="857.0" y1="279.7" x2="694.1" y2="487.7" stroke="#000" stroke-width="4.5"/><polygon points="667.0,522.3 674.4,472.2 713.8,503.1" fill="#000"/><line x1="1392.6" y1="302.0" x2="740.4" y2="605.2" stroke="#000" stroke-width="4.5"/><polygon points="700.5,623.7 729.9,582.5 750.9,627.8" fill="#000"/><line x1="284.0" y1="2761.0" x2="284.0" y2="2534.0" stroke="#000" stroke-width="4.5"/><polygon points="284.0,2490.0 309.0,2534.0 259.0,2534.0" fill="#000"/><line x1="3035.0" y1="2748.0" x2="3036.6" y2="2434.8" stroke="#000" stroke-width="4.5"/><polygon points="3036.8,2390.8 3061.6,2434.9 3011.6,2434.7" fill="#000"/><line x1="3035.0" y1="2748.0" x2="3211.4" y2="1983.2" stroke="#000" stroke-width="4.5"/><polygon points="3221.3,1940.3 3235.8,1988.8 3187.1,1977.6" fill="#000"/></svg>
</div>
</body></html>
